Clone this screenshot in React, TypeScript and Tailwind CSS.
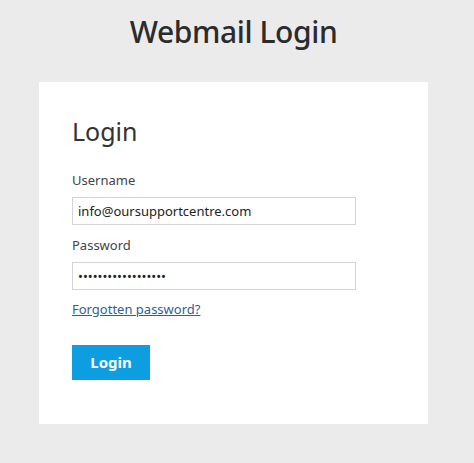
import React from "react";

const App = () => {
  return (
    <div
      className="min-h-[463px] w-full bg-[#ebebeb] pt-[12px] pb-[40px] text-[#333]"
      style={{ fontFamily: '"Noto Sans", "Open Sans", sans-serif' }}
    >
      <h1 className="pr-[7px] text-center text-[30px] font-medium leading-[40px] tracking-[-0.4px] text-[#2b2b2b]">
        Webmail Login
      </h1>
      <div className="mt-[30px] ml-[39px] w-[389px] bg-white px-[33px] pt-[32px] pb-[44px]">
        <h2 className="text-[25px] leading-[34px] text-[#333]">Login</h2>
        <form className="mt-[22px] flex flex-col" onSubmit={(e) => e.preventDefault()}>
          <label htmlFor="username" className="text-[13px] leading-[20px] text-[#444]">
            Username
          </label>
          <input
            id="username"
            type="text"
            defaultValue="info@oursupportcentre.com"
            className="mt-[7px] h-[28px] w-[284px] border border-[#d4d4d4] px-[5px] text-[13px] text-[#222] outline-none"
          />
          <label htmlFor="password" className="mt-[10px] text-[13px] leading-[20px] text-[#444]">
            Password
          </label>
          <input
            id="password"
            type="password"
            defaultValue="••••••••••••••••••"
            className="mt-[7px] h-[28px] w-[284px] border border-[#d4d4d4] px-[5px] text-[13px] text-[#222] outline-none"
          />
          <a
            href="#"
            className="mt-[9px] self-start text-[13px] leading-[20px] text-[#2f5f8f] underline"
          >
            Forgotten password?
          </a>
          <button
            type="submit"
            className="mt-[26px] h-[35px] w-[78px] self-start bg-[#0c9ee0] text-[15px] font-bold text-white"
          >
            Login
          </button>
        </form>
      </div>
    </div>
  );
};

export default App;
